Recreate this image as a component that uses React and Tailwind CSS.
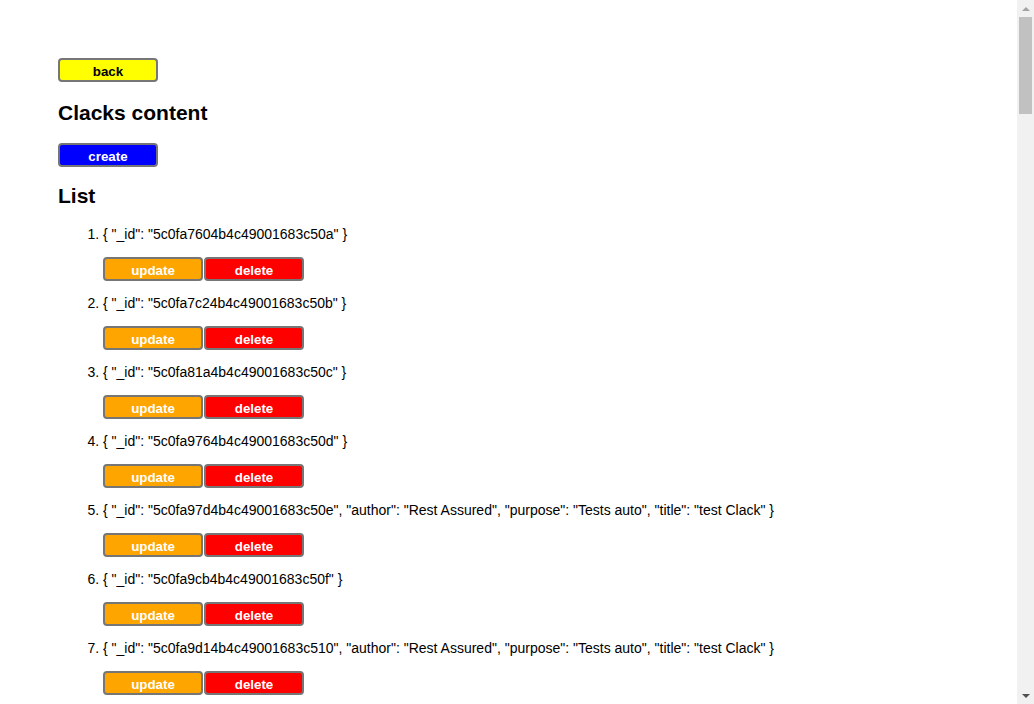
const clacks = [
  '{ "_id": "5c0fa7604b4c49001683c50a" }',
  '{ "_id": "5c0fa7c24b4c49001683c50b" }',
  '{ "_id": "5c0fa81a4b4c49001683c50c" }',
  '{ "_id": "5c0fa9764b4c49001683c50d" }',
  '{ "_id": "5c0fa97d4b4c49001683c50e", "author": "Rest Assured", "purpose": "Tests auto", "title": "test Clack" }',
  '{ "_id": "5c0fa9cb4b4c49001683c50f" }',
  '{ "_id": "5c0fa9d14b4c49001683c510", "author": "Rest Assured", "purpose": "Tests auto", "title": "test Clack" }',
  '{ "_id": "5c0faa2b4b4c49001683c511" }',
];

function Btn({ color, text = 'text-white', children }) {
  return (
    <button
      className={`w-[100px] h-[24px] rounded-[4px] border-2 border-[#767676] text-[13.33px] font-bold leading-none pt-[3px] ${color} ${text}`}
    >
      {children}
    </button>
  );
}

export default function App() {
  return (
    <div
      className="flex h-screen overflow-hidden bg-white text-black"
      style={{ fontFamily: '"Liberation Sans", Arial, sans-serif' }}
    >
      <main className="flex-1 overflow-hidden px-[58px] pt-[58px]">
        <div className="h-[24px] flex">
          <Btn color="bg-[#ffff00]" text="text-black">back</Btn>
        </div>
        <h3 className="text-[21px] font-bold leading-[24px] mt-[19px]">Clacks content</h3>
        <div className="mt-[18px] h-[24px] flex">
          <Btn color="bg-[#0000ff]">create</Btn>
        </div>
        <h3 className="text-[21px] font-bold leading-[24px] mt-[17px]">List</h3>
        <ol className="list-decimal pl-[45px] mt-[18px] text-[14px]">
          {clacks.map((c, i) => (
            <li key={i} className="mb-[14px] leading-[16px]">
              <div>{c}</div>
              <div className="flex gap-[1px] mt-[15px]">
                <Btn color="bg-[#ffa500]">update</Btn>
                <Btn color="bg-[#ff0000]">delete</Btn>
              </div>
            </li>
          ))}
        </ol>
      </main>
      <aside className="w-[17px] bg-[#f1f1f1] flex flex-col items-center">
        <div className="h-[17px] flex items-center justify-center">
          <div className="w-0 h-0 border-l-[4px] border-r-[4px] border-b-[4px] border-l-transparent border-r-transparent border-b-[#a3a3a3]" />
        </div>
        <div className="w-[13px] h-[97px] bg-[#c1c1c1]" />
        <div className="flex-1" />
        <div className="h-[17px] flex items-center justify-center">
          <div className="w-0 h-0 border-l-[4px] border-r-[4px] border-t-[4px] border-l-transparent border-r-transparent border-t-[#505050]" />
        </div>
      </aside>
    </div>
  );
}
